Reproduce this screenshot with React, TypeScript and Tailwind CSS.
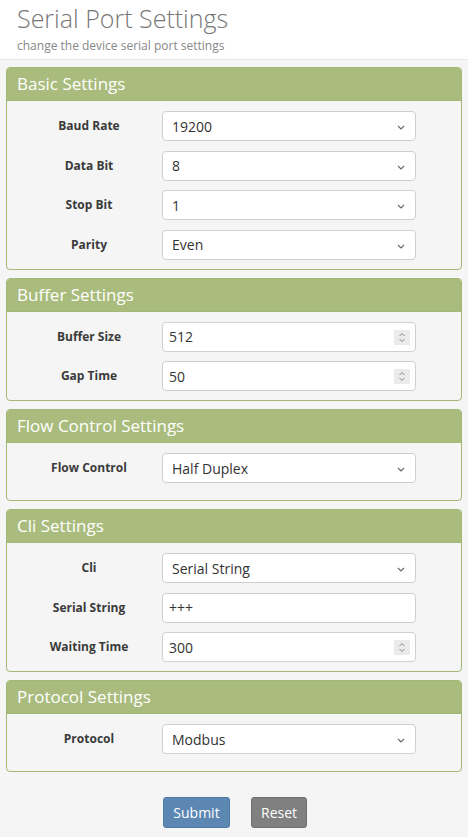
import React from "react";

const font = { fontFamily: '"Open Sans", "Noto Sans", sans-serif' };

function Chevron() {
  return (
    <svg width="8" height="5" viewBox="0 0 8 5" className="absolute right-[10px] top-[13px]">
      <path d="M1 1l3 3 3-3" fill="none" stroke="#666" strokeWidth="1.1" />
    </svg>
  );
}

function Spinner() {
  return (
    <div className="absolute right-[5px] top-[7px] flex h-[15px] w-[16px] items-center justify-center bg-[#ebebeb]">
      <svg width="8" height="11" viewBox="0 0 8 11">
        <path d="M1.5 4L4 1.5 6.5 4M1.5 7L4 9.5 6.5 7" fill="none" stroke="#888" strokeWidth="1" />
      </svg>
    </div>
  );
}

type Field = { label: string; value: string; kind: "select" | "number" | "text" };

function Row({ f }: { f: Field }) {
  const pad = f.kind === "select" ? "pl-[9px]" : "pl-[6px]";
  return (
    <div className="flex items-center">
      <div className="w-[150px] pl-[14px] text-center text-[12px] font-bold text-[#3a3a3a]">{f.label}</div>
      <div className={`relative ml-[5px] flex h-[30px] w-[254px] items-center rounded-[4px] border border-[#cfcfcf] bg-white ${pad} text-[14px] text-[#333]`}>
        {f.value}
        {f.kind === "select" && <Chevron />}
        {f.kind === "number" && <Spinner />}
      </div>
    </div>
  );
}

function Panel({ title, fields, bottom }: { title: string; fields: Field[]; bottom: string }) {
  return (
    <div className="overflow-hidden rounded-[4px] border border-[#a3b873] bg-[#f4f5f4]">
      <div className="flex h-[33px] items-center border-b border-[#a3b873] bg-[#a9bc7d] pl-[10px] text-[17px] text-white">
        {title}
      </div>
      <div className={`flex flex-col gap-[9.5px] pt-[10px] ${bottom}`}>
        {fields.map((f) => (
          <Row key={f.label} f={f} />
        ))}
      </div>
    </div>
  );
}

export default function App() {
  return (
    <div className="min-h-[837px] w-[468px] bg-[#f4f5f4]" style={font}>
      <div className="h-[60px] border-b border-[#e6e6e6] bg-white pl-[17px] pt-[1px]">
        <h1 className="text-[25px] font-light leading-[34px] text-[#777]">Serial Port Settings</h1>
        <p className="mt-[2px] text-[12px] leading-[18px] text-[#888]">change the device serial port settings</p>
      </div>
      <div className="flex flex-col gap-[8px] px-[6px] pt-[7px]">
        <Panel
          title="Basic Settings"
          bottom="pb-[9px]"
          fields={[
            { label: "Baud Rate", value: "19200", kind: "select" },
            { label: "Data Bit", value: "8", kind: "select" },
            { label: "Stop Bit", value: "1", kind: "select" },
            { label: "Parity", value: "Even", kind: "select" },
          ]}
        />
        <Panel
          title="Buffer Settings"
          bottom="pb-[9px]"
          fields={[
            { label: "Buffer Size", value: "512", kind: "number" },
            { label: "Gap Time", value: "50", kind: "number" },
          ]}
        />
        <Panel
          title="Flow Control Settings"
          bottom="pb-[17px]"
          fields={[{ label: "Flow Control", value: "Half Duplex", kind: "select" }]}
        />
        <Panel
          title="Cli Settings"
          bottom="pb-[9px]"
          fields={[
            { label: "Cli", value: "Serial String", kind: "select" },
            { label: "Serial String", value: "+++", kind: "text" },
            { label: "Waiting Time", value: "300", kind: "number" },
          ]}
        />
        <Panel
          title="Protocol Settings"
          bottom="pb-[17px]"
          fields={[{ label: "Protocol", value: "Modbus", kind: "select" }]}
        />
      </div>
      <div className="flex justify-center gap-[21px] pt-[25px] pl-[2px]">
        <button className="h-[31px] w-[67px] rounded-[3px] border border-[#4f7aa6] bg-[#5b87b2] text-[14px] text-white">
          Submit
        </button>
        <button className="h-[31px] w-[56px] rounded-[3px] border border-[#707070] bg-[#808080] text-[14px] text-white">
          Reset
        </button>
      </div>
    </div>
  );
}
